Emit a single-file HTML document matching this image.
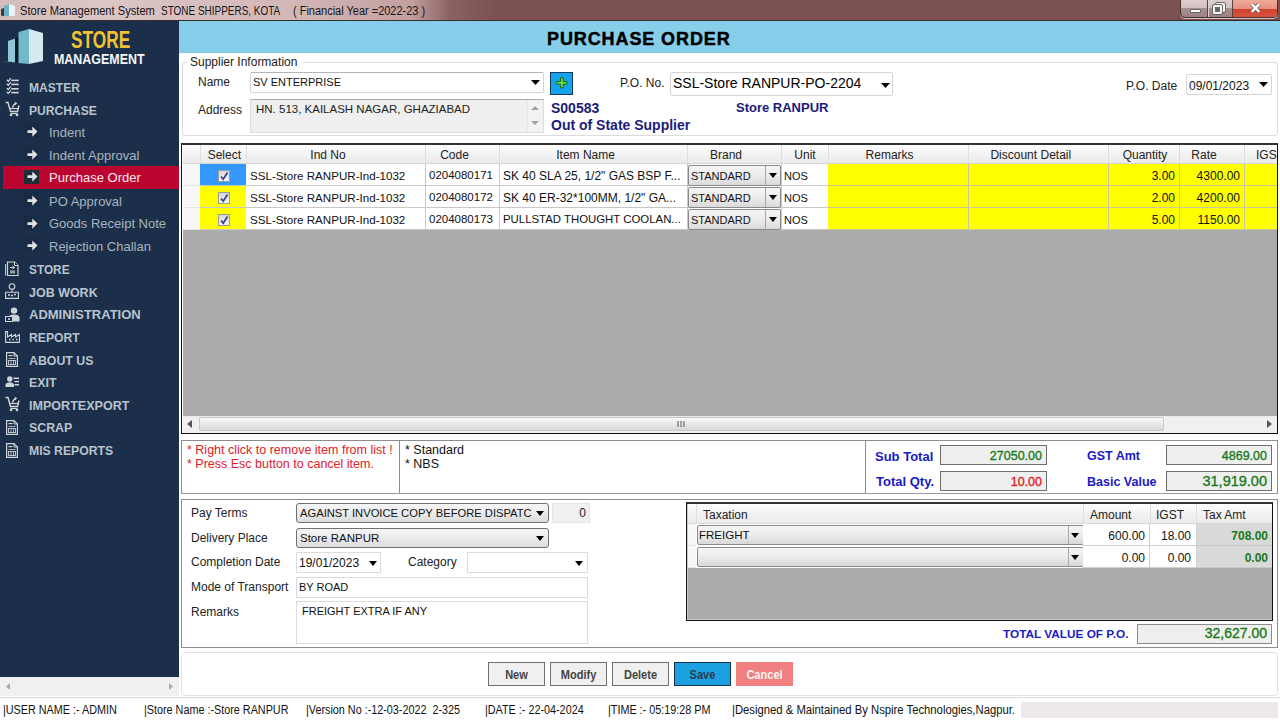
<!DOCTYPE html>
<html><head><meta charset="utf-8">
<style>
*{margin:0;padding:0;box-sizing:border-box}
html,body{width:1280px;height:720px;overflow:hidden;background:#fff;font-family:"Liberation Sans",sans-serif;font-size:12px;color:#000}
.a{position:absolute}
.t{position:absolute;white-space:nowrap;line-height:1}
#title{left:0;top:0;width:1280px;height:21px;background:linear-gradient(90deg,#d4bcbc 0px,#dcc6c6 100px,#d2b6b6 300px,#c4a0a0 410px,#8a6262 450px,#7a5050 500px,#7a5050 1280px)}
#side{left:0;top:21px;width:179px;height:656px;background:#1b2f4a}
.mm{position:absolute;left:29px;font-weight:bold;font-size:13px;color:#b9c3ce;line-height:1;transform-origin:0 0;white-space:nowrap}
.ms{position:absolute;left:49px;font-size:13px;color:#a9b4bf;line-height:1;white-space:nowrap}
.arr{position:absolute;left:26px;width:12px;height:12px}
</style></head><body>
<!-- title bar -->
<div id="title" class="a"></div>
<div class="a" style="left:0;top:20px;width:1280px;height:1px;background:#3a2a2a"></div>
<div class="t" style="left:20px;top:5px;font-size:12.3px;color:#151515;transform-origin:0 0;transform:scaleX(0.905)">Store Management System</div><div class="t" style="left:161px;top:5px;font-size:12.3px;color:#151515;transform-origin:0 0;transform:scaleX(0.81)">STONE SHIPPERS, KOTA</div><div class="t" style="left:293px;top:5px;font-size:12.3px;color:#151515;transform-origin:0 0;transform:scaleX(0.893)">( Financial Year =2022-23 )</div>

<!-- sidebar -->
<div id="side" class="a"></div>
<div class="t" style="left:71px;top:28px;font-size:24px;font-weight:bold;color:#f1c232;transform-origin:0 0;transform:scaleX(0.72)">STORE</div>
<div class="t" style="left:54px;top:51px;font-size:15px;font-weight:bold;color:#f4f6f8;transform-origin:0 0;transform:scaleX(0.83)">MANAGEMENT</div>

<div class="mm" style="top:80.8px;transform:scaleX(0.93)">MASTER</div>
<div class="mm" style="top:104.3px;transform:scaleX(0.93)">PURCHASE</div>
<div class="mm" style="top:263.3px;transform:scaleX(0.91)">STORE</div>
<div class="mm" style="top:285.8px;transform:scaleX(0.96)">JOB WORK</div>
<div class="mm" style="top:308.3px;transform:scaleX(1.0)">ADMINISTRATION</div>
<div class="mm" style="top:330.8px;transform:scaleX(0.935)">REPORT</div>
<div class="mm" style="top:353.5px;transform:scaleX(0.95)">ABOUT US</div>
<div class="mm" style="top:375.8px;transform:scaleX(0.95)">EXIT</div>
<div class="mm" style="top:398.8px;transform:scaleX(0.966)">IMPORTEXPORT</div>
<div class="mm" style="top:421.3px;transform:scaleX(0.95)">SCRAP</div>
<div class="mm" style="top:444.3px;transform:scaleX(0.94)">MIS REPORTS</div>
<div class="a" style="left:3px;top:166px;width:176px;height:23px;background:#bb0530"></div>
<div class="ms" style="top:126.3px">Indent</div>
<div class="ms" style="top:149.3px">Indent Approval</div>
<div class="ms" style="top:171.3px;color:#fbe9ee">Purchase Order</div>
<div class="ms" style="top:194.5px">PO Approval</div>
<div class="ms" style="top:217px">Goods Receipt Note</div>
<div class="ms" style="top:239.5px">Rejection Challan</div>

<!-- header -->
<div class="a" style="left:179px;top:21px;width:1101px;height:32px;background:#87ceeb"></div>
<div class="t" style="left:547px;top:30px;font-size:18px;font-weight:bold;letter-spacing:0.9px;-webkit-text-stroke:0.45px #000">PURCHASE ORDER</div>


<!-- form bg -->
<div class="a" style="left:179px;top:53px;width:1101px;height:624px;background:#fff"></div>
<!-- supplier group -->
<div class="a" style="left:182px;top:62px;width:1096px;height:74px;border:1px solid #dcdcdc;border-radius:3px"></div>
<div class="a" style="left:187px;top:56px;width:116px;height:10px;background:#fff"></div>
<div class="t" style="left:190px;top:56px;font-size:12px;color:#222">Supplier Information</div>
<div class="t" style="left:198px;top:76px;font-size:12px;color:#222">Name</div>
<div class="t" style="left:198px;top:104px;font-size:12px;color:#222">Address</div>
<div class="a" style="left:250px;top:72px;width:294px;height:21px;border:1px solid #d4d4d4;border-top-color:#b4b4b4;border-radius:2px;background:#fff"></div>
<div class="t" style="left:253px;top:77px;font-size:11px;color:#111">SV ENTERPRISE</div>
<svg class="a" style="left:531px;top:80px" width="9" height="5"><path d="M0 0H9L4.5 5Z" fill="#000"/></svg>
<div class="a" style="left:250px;top:99px;width:294px;height:34px;border:1px solid #dcdcdc;border-top-color:#a8a8a8;background:#efefef"></div>
<div class="a" style="left:527px;top:100px;width:16px;height:32px;background:#f2f2f2;border-left:1px solid #e4e4e4"></div>
<svg class="a" style="left:531px;top:106px" width="8" height="4"><path d="M0 4H8L4 0Z" fill="#a0a0a0"/></svg>
<svg class="a" style="left:531px;top:121px" width="8" height="4"><path d="M0 0H8L4 4Z" fill="#a0a0a0"/></svg>
<div class="t" style="left:256px;top:104px;font-size:11.5px;color:#222">HN. 513, KAILASH NAGAR, GHAZIABAD</div>
<div class="a" style="left:550px;top:72px;width:23px;height:23px;background:#13a4ec;border:1px solid #143c5a"></div>
<svg class="a" style="left:556px;top:77px" width="12" height="12"><path d="M4.5 0.7h2.6v3.8h3.8v2.6h-3.8v3.8h-2.6v-3.8h-3.8v-2.6h3.8z" fill="#6ee04a" stroke="#1f6a14" stroke-width="1"/></svg>
<div class="t" style="left:551px;top:101px;font-size:14px;font-weight:bold;color:#1c1c7c">S00583</div>
<div class="t" style="left:551px;top:118px;font-size:14px;font-weight:bold;color:#1c1c7c">Out of State Supplier</div>
<div class="t" style="left:620px;top:77px;font-size:12px;color:#222">P.O. No.</div>
<div class="a" style="left:670px;top:72px;width:223px;height:24px;border:1px solid #d4d4d4;border-radius:2px;background:#fff"></div>
<div class="t" style="left:673px;top:76px;font-size:14px;color:#000">SSL-Store RANPUR-PO-2204</div>
<svg class="a" style="left:881px;top:83px" width="9" height="5"><path d="M0 0H9L4.5 5Z" fill="#000"/></svg>
<div class="t" style="left:736px;top:101px;font-size:13px;font-weight:bold;color:#1c1c7c">Store RANPUR</div>
<div class="t" style="left:1126px;top:80px;font-size:12px;color:#222">P.O. Date</div>
<div class="a" style="left:1186px;top:74px;width:86px;height:21px;border:1px solid #d4d4d4;border-radius:2px;background:#fff"></div>
<div class="t" style="left:1189px;top:80px;font-size:12px;color:#111">09/01/2023</div>
<svg class="a" style="left:1259px;top:82px" width="9" height="5"><path d="M0 0H9L4.5 5Z" fill="#000"/></svg>
<!-- grid -->
<div class="a" style="left:181px;top:143px;width:1097px;height:291px;border:1px solid #111;border-top:2px solid #333;background:#ababab;overflow:hidden"><div class="a" style="left:0;top:0;width:1px;height:300px;background:#fff"></div><div class="a" style="left:0;top:287px;width:1100px;height:1px;background:#fff"></div><div class="a" style="left:1px;top:0;width:1100px;height:300px">
<div class="a" style="left:0;top:0;width:1100px;height:19px;background:linear-gradient(#fdfdfd,#f3f3f3 50%,#eaeaea);border-bottom:1px solid #d5d5d5"></div>
<div class="a" style="left:17px;top:0;width:1px;height:19px;background:#dedede"></div>
<div class="a" style="left:63px;top:0;width:1px;height:19px;background:#dedede"></div>
<div class="t" style="left:-18.7px;width:120px;top:4px;text-align:center;font-size:12px;color:#222">Select</div>
<div class="a" style="left:242px;top:0;width:1px;height:19px;background:#dedede"></div>
<div class="t" style="left:85.0px;width:120px;top:4px;text-align:center;font-size:12px;color:#222">Ind No</div>
<div class="a" style="left:316px;top:0;width:1px;height:19px;background:#dedede"></div>
<div class="t" style="left:211.5px;width:120px;top:4px;text-align:center;font-size:12px;color:#222">Code</div>
<div class="a" style="left:504px;top:0;width:1px;height:19px;background:#dedede"></div>
<div class="t" style="left:342.6px;width:120px;top:4px;text-align:center;font-size:12px;color:#222">Item Name</div>
<div class="a" style="left:598px;top:0;width:1px;height:19px;background:#dedede"></div>
<div class="t" style="left:483.0px;width:120px;top:4px;text-align:center;font-size:12px;color:#222">Brand</div>
<div class="a" style="left:645px;top:0;width:1px;height:19px;background:#dedede"></div>
<div class="t" style="left:562.0px;width:120px;top:4px;text-align:center;font-size:12px;color:#222">Unit</div>
<div class="a" style="left:785px;top:0;width:1px;height:19px;background:#dedede"></div>
<div class="t" style="left:646.6px;width:120px;top:4px;text-align:center;font-size:12px;color:#222">Remarks</div>
<div class="a" style="left:925px;top:0;width:1px;height:19px;background:#dedede"></div>
<div class="t" style="left:787.8px;width:120px;top:4px;text-align:center;font-size:12px;color:#222">Discount Detail</div>
<div class="a" style="left:996px;top:0;width:1px;height:19px;background:#dedede"></div>
<div class="t" style="left:902.0px;width:120px;top:4px;text-align:center;font-size:12px;color:#222">Quantity</div>
<div class="a" style="left:1061px;top:0;width:1px;height:19px;background:#dedede"></div>
<div class="t" style="left:961.0px;width:120px;top:4px;text-align:center;font-size:12px;color:#222">Rate</div>
<div class="a" style="left:1127px;top:0;width:1px;height:19px;background:#dedede"></div>
<div class="t" style="left:1027.0px;width:120px;top:4px;text-align:center;font-size:12px;color:#222">IGST</div>
<div class="a" style="left:0;top:19px;width:17px;height:22px;background:#f7f7f7;border-bottom:1px solid #e6e6e6"></div>
<div class="a" style="left:17px;top:19px;width:46px;height:22px;background:#3399ff;border-bottom:1px solid #c8c8c8"></div>
<div class="a" style="left:35px;top:25px;width:12px;height:12px;background:linear-gradient(#d8d8d8,#f6f6f6);border:1px solid #9a9a9a"></div>
<svg class="a" style="left:36px;top:26px" width="10" height="10"><path d="M2 5.5L4.2 8.3L8.5 1.5" stroke="#34448c" stroke-width="1.7" fill="none"/></svg>
<div class="a" style="left:63px;top:19px;width:582px;height:22px;background:#fff;border-bottom:1px solid #c8c8c8"></div>
<div class="a" style="left:242px;top:19px;width:1px;height:22px;background:#c8c8c8"></div>
<div class="a" style="left:316px;top:19px;width:1px;height:22px;background:#c8c8c8"></div>
<div class="a" style="left:504px;top:19px;width:1px;height:22px;background:#c8c8c8"></div>
<div class="a" style="left:598px;top:19px;width:1px;height:22px;background:#c8c8c8"></div>
<div class="a" style="left:645px;top:19px;width:1px;height:22px;background:#c8c8c8"></div>
<div class="t" style="left:67px;top:25px;font-size:11.6px;color:#111">SSL-Store RANPUR-Ind-1032</div>
<div class="t" style="left:246px;top:25px;font-size:11.5px;color:#111">0204080171</div>
<div class="t" style="left:320px;top:25px;font-size:12px;color:#111">SK 40 SLA 25, 1/2&quot; GAS BSP F...</div>
<div class="a" style="left:505px;top:20px;width:93px;height:21px;border:1px solid #8a8a8a;border-radius:2px;background:linear-gradient(#f5f5f5,#ececec 50%,#dadada)"></div>
<div class="a" style="left:582px;top:21px;width:1px;height:19px;background:#a8a8a8"></div>
<div class="t" style="left:508px;top:26px;font-size:11px;color:#111">STANDARD</div>
<svg class="a" style="left:586px;top:28px" width="8" height="5"><path d="M0 0H8L4 5Z" fill="#000"/></svg>
<div class="t" style="left:601px;top:26px;font-size:11px;color:#111">NOS</div>
<div class="a" style="left:645px;top:19px;width:500px;height:22px;background:#ffff00;border-bottom:1px solid #c8c89a"></div>
<div class="a" style="left:785px;top:19px;width:1px;height:22px;background:#c8c89a"></div>
<div class="a" style="left:925px;top:19px;width:1px;height:22px;background:#c8c89a"></div>
<div class="a" style="left:996px;top:19px;width:1px;height:22px;background:#c8c89a"></div>
<div class="a" style="left:1061px;top:19px;width:1px;height:22px;background:#c8c89a"></div>
<div class="t" style="left:925px;width:67px;top:25px;text-align:right;font-size:12px;color:#111">3.00</div>
<div class="t" style="left:996px;width:61px;top:25px;text-align:right;font-size:12px;color:#111">4300.00</div>
<div class="a" style="left:0;top:41px;width:17px;height:22px;background:#f7f7f7;border-bottom:1px solid #e6e6e6"></div>
<div class="a" style="left:17px;top:41px;width:46px;height:22px;background:#ffff00;border-bottom:1px solid #c8c8c8"></div>
<div class="a" style="left:35px;top:47px;width:12px;height:12px;background:linear-gradient(#d8d8d8,#f6f6f6);border:1px solid #9a9a9a"></div>
<svg class="a" style="left:36px;top:48px" width="10" height="10"><path d="M2 5.5L4.2 8.3L8.5 1.5" stroke="#34448c" stroke-width="1.7" fill="none"/></svg>
<div class="a" style="left:63px;top:41px;width:582px;height:22px;background:#fff;border-bottom:1px solid #c8c8c8"></div>
<div class="a" style="left:242px;top:41px;width:1px;height:22px;background:#c8c8c8"></div>
<div class="a" style="left:316px;top:41px;width:1px;height:22px;background:#c8c8c8"></div>
<div class="a" style="left:504px;top:41px;width:1px;height:22px;background:#c8c8c8"></div>
<div class="a" style="left:598px;top:41px;width:1px;height:22px;background:#c8c8c8"></div>
<div class="a" style="left:645px;top:41px;width:1px;height:22px;background:#c8c8c8"></div>
<div class="t" style="left:67px;top:47px;font-size:11.6px;color:#111">SSL-Store RANPUR-Ind-1032</div>
<div class="t" style="left:246px;top:47px;font-size:11.5px;color:#111">0204080172</div>
<div class="t" style="left:320px;top:47px;font-size:12px;color:#111">SK 40 ER-32*100MM, 1/2&quot; GA...</div>
<div class="a" style="left:505px;top:42px;width:93px;height:21px;border:1px solid #8a8a8a;border-radius:2px;background:linear-gradient(#f5f5f5,#ececec 50%,#dadada)"></div>
<div class="a" style="left:582px;top:43px;width:1px;height:19px;background:#a8a8a8"></div>
<div class="t" style="left:508px;top:48px;font-size:11px;color:#111">STANDARD</div>
<svg class="a" style="left:586px;top:50px" width="8" height="5"><path d="M0 0H8L4 5Z" fill="#000"/></svg>
<div class="t" style="left:601px;top:48px;font-size:11px;color:#111">NOS</div>
<div class="a" style="left:645px;top:41px;width:500px;height:22px;background:#ffff00;border-bottom:1px solid #c8c89a"></div>
<div class="a" style="left:785px;top:41px;width:1px;height:22px;background:#c8c89a"></div>
<div class="a" style="left:925px;top:41px;width:1px;height:22px;background:#c8c89a"></div>
<div class="a" style="left:996px;top:41px;width:1px;height:22px;background:#c8c89a"></div>
<div class="a" style="left:1061px;top:41px;width:1px;height:22px;background:#c8c89a"></div>
<div class="t" style="left:925px;width:67px;top:47px;text-align:right;font-size:12px;color:#111">2.00</div>
<div class="t" style="left:996px;width:61px;top:47px;text-align:right;font-size:12px;color:#111">4200.00</div>
<div class="a" style="left:0;top:63px;width:17px;height:22px;background:#f7f7f7;border-bottom:1px solid #e6e6e6"></div>
<div class="a" style="left:17px;top:63px;width:46px;height:22px;background:#ffff00;border-bottom:1px solid #c8c8c8"></div>
<div class="a" style="left:35px;top:69px;width:12px;height:12px;background:linear-gradient(#d8d8d8,#f6f6f6);border:1px solid #9a9a9a"></div>
<svg class="a" style="left:36px;top:70px" width="10" height="10"><path d="M2 5.5L4.2 8.3L8.5 1.5" stroke="#34448c" stroke-width="1.7" fill="none"/></svg>
<div class="a" style="left:63px;top:63px;width:582px;height:22px;background:#fff;border-bottom:1px solid #c8c8c8"></div>
<div class="a" style="left:242px;top:63px;width:1px;height:22px;background:#c8c8c8"></div>
<div class="a" style="left:316px;top:63px;width:1px;height:22px;background:#c8c8c8"></div>
<div class="a" style="left:504px;top:63px;width:1px;height:22px;background:#c8c8c8"></div>
<div class="a" style="left:598px;top:63px;width:1px;height:22px;background:#c8c8c8"></div>
<div class="a" style="left:645px;top:63px;width:1px;height:22px;background:#c8c8c8"></div>
<div class="t" style="left:67px;top:69px;font-size:11.6px;color:#111">SSL-Store RANPUR-Ind-1032</div>
<div class="t" style="left:246px;top:69px;font-size:11.5px;color:#111">0204080173</div>
<div class="t" style="left:320px;top:69px;font-size:11.4px;color:#111">PULLSTAD THOUGHT COOLAN...</div>
<div class="a" style="left:505px;top:64px;width:93px;height:21px;border:1px solid #8a8a8a;border-radius:2px;background:linear-gradient(#f5f5f5,#ececec 50%,#dadada)"></div>
<div class="a" style="left:582px;top:65px;width:1px;height:19px;background:#a8a8a8"></div>
<div class="t" style="left:508px;top:70px;font-size:11px;color:#111">STANDARD</div>
<svg class="a" style="left:586px;top:72px" width="8" height="5"><path d="M0 0H8L4 5Z" fill="#000"/></svg>
<div class="t" style="left:601px;top:70px;font-size:11px;color:#111">NOS</div>
<div class="a" style="left:645px;top:63px;width:500px;height:22px;background:#ffff00;border-bottom:1px solid #c8c89a"></div>
<div class="a" style="left:785px;top:63px;width:1px;height:22px;background:#c8c89a"></div>
<div class="a" style="left:925px;top:63px;width:1px;height:22px;background:#c8c89a"></div>
<div class="a" style="left:996px;top:63px;width:1px;height:22px;background:#c8c89a"></div>
<div class="a" style="left:1061px;top:63px;width:1px;height:22px;background:#c8c89a"></div>
<div class="t" style="left:925px;width:67px;top:69px;text-align:right;font-size:12px;color:#111">5.00</div>
<div class="t" style="left:996px;width:61px;top:69px;text-align:right;font-size:12px;color:#111">1150.00</div>
<div class="a" style="left:0;top:271px;width:1100px;height:17px;background:#f0f0f0;border-top:1px solid #e8e8e8"></div>
<div class="a" style="left:16px;top:272px;width:965px;height:14px;border:1px solid #c8c8c8;border-radius:2px;background:linear-gradient(#f8f8f8,#e8e8e8 50%,#d8d8d8)"></div>
<svg class="a" style="left:4px;top:275px" width="5" height="8"><path d="M5 0V8L0 4Z" fill="#555"/></svg>
<svg class="a" style="left:1084px;top:275px" width="5" height="8"><path d="M0 0V8L5 4Z" fill="#555"/></svg>
<svg class="a" style="left:494px;top:275px" width="8" height="8"><path d="M1 1V7M4 1V7M7 1V7" stroke="#555" stroke-width="1"/></svg>
</div></div>
<!-- notes/totals -->
<div class="a" style="left:181px;top:440px;width:1097px;height:54px;border:1px solid #8c8c8c;border-bottom-color:#9a9a9a"></div>
<div class="a" style="left:399px;top:441px;width:1px;height:52px;background:#8c8c8c"></div>
<div class="a" style="left:865px;top:441px;width:1px;height:52px;background:#8c8c8c"></div>
<div class="t" style="left:187px;top:444px;font-size:12.5px;color:#e0202a">* Right click to remove item from list !</div>
<div class="t" style="left:187px;top:458px;font-size:12.5px;color:#e0202a">* Press Esc button to cancel item.</div>
<div class="t" style="left:405px;top:444px;font-size:12.5px;color:#111">* Standard</div>
<div class="t" style="left:405px;top:458px;font-size:12.5px;color:#111">* NBS</div>
<div class="t" style="left:875px;top:450px;font-size:13px;font-weight:bold;color:#1a1ac4">Sub Total</div>
<div class="t" style="left:876px;top:475px;font-size:13px;font-weight:bold;color:#1a1ac4">Total Qty.</div>
<div class="t" style="left:1087px;top:450px;font-size:12.5px;font-weight:bold;color:#1a1ac4">GST Amt</div>
<div class="t" style="left:1087px;top:476px;font-size:12.5px;font-weight:bold;color:#1a1ac4">Basic Value</div>
<div class="a" style="left:940px;top:445px;width:107px;height:20px;border:1px solid #6e6e6e;background:#efefef"></div>
<div class="t" style="left:940px;width:102px;top:450px;text-align:right;font-size:12.5px;color:#1a7a1a;-webkit-text-stroke:0.35px #1a7a1a">27050.00</div>
<div class="a" style="left:940px;top:471px;width:107px;height:20px;border:1px solid #6e6e6e;background:#efefef"></div>
<div class="t" style="left:940px;width:102px;top:476px;text-align:right;font-size:12.5px;color:#e02020;-webkit-text-stroke:0.35px #e02020">10.00</div>
<div class="a" style="left:1166px;top:445px;width:106px;height:20px;border:1px solid #6e6e6e;background:#efefef"></div>
<div class="t" style="left:1166px;width:101px;top:450px;text-align:right;font-size:12.5px;color:#1a7a1a;-webkit-text-stroke:0.35px #1a7a1a">4869.00</div>
<div class="a" style="left:1166px;top:471px;width:106px;height:20px;border:1px solid #6e6e6e;background:#efefef"></div>
<div class="t" style="left:1166px;width:101px;top:474px;text-align:right;font-size:14.5px;color:#1a7a1a;-webkit-text-stroke:0.35px #1a7a1a">31,919.00</div>
<div class="a" style="left:181px;top:499px;width:1097px;height:149px;border:1px solid #8c8c8c"></div>
<div class="t" style="left:191px;top:507px;font-size:12px;color:#222">Pay Terms</div>
<div class="t" style="left:191px;top:532px;font-size:12px;color:#222">Delivery Place</div>
<div class="t" style="left:191px;top:556px;font-size:12px;color:#222">Completion Date</div>
<div class="t" style="left:191px;top:581px;font-size:12px;color:#222">Mode of Transport</div>
<div class="t" style="left:191px;top:606px;font-size:12px;color:#222">Remarks</div>
<div class="a" style="left:296px;top:503px;width:253px;height:20px;border:1px solid #707070;border-radius:3px;background:linear-gradient(#f6f6f6,#ebebeb 50%,#dcdcdc);overflow:hidden"><div class="t" style="left:3px;top:4px;font-size:11.2px;color:#111;width:232px;overflow:hidden">AGAINST INVOICE COPY BEFORE DISPATC</div></div>
<svg class="a" style="left:536px;top:511px" width="8" height="5"><path d="M0 0H8L4 5Z" fill="#000"/></svg>
<div class="a" style="left:296px;top:528px;width:253px;height:20px;border:1px solid #707070;border-radius:3px;background:linear-gradient(#f6f6f6,#ebebeb 50%,#dcdcdc);overflow:hidden"><div class="t" style="left:3px;top:4px;font-size:11.5px;color:#111;width:232px;overflow:hidden">Store RANPUR</div></div>
<svg class="a" style="left:536px;top:536px" width="8" height="5"><path d="M0 0H8L4 5Z" fill="#000"/></svg>
<div class="a" style="left:552px;top:503px;width:38px;height:20px;border:1px solid #e4e4e4;background:#f0f0f0"></div>
<div class="t" style="left:552px;width:34px;top:507px;text-align:right;font-size:12px;color:#222">0</div>
<div class="a" style="left:296px;top:552px;width:85px;height:21px;border:1px solid #dcdcdc;background:#fff"></div>
<div class="t" style="left:299px;top:557px;font-size:12px;color:#111">19/01/2023</div>
<svg class="a" style="left:369px;top:561px" width="8" height="5"><path d="M0 0H8L4 5Z" fill="#000"/></svg>
<div class="t" style="left:408px;top:556px;font-size:12px;color:#222">Category</div>
<div class="a" style="left:467px;top:552px;width:121px;height:21px;border:1px solid #dcdcdc;background:#fff"></div>
<svg class="a" style="left:575px;top:561px" width="8" height="5"><path d="M0 0H8L4 5Z" fill="#000"/></svg>
<div class="a" style="left:296px;top:577px;width:292px;height:21px;border:1px solid #dcdcdc;background:#fff"></div>
<div class="t" style="left:299px;top:582px;font-size:11px;color:#111">BY ROAD</div>
<div class="a" style="left:296px;top:601px;width:292px;height:43px;border:1px solid #dcdcdc;background:#fff"></div>
<div class="t" style="left:302px;top:606px;font-size:11px;color:#111">FREIGHT EXTRA IF ANY</div>
<div class="a" style="left:686px;top:502px;width:587px;height:119px;border:1px solid #111;border-top:2px solid #333;background:#ababab;overflow:hidden"><div class="a" style="left:0;top:0;width:1px;height:130px;background:#c8c8c8"></div><div class="a" style="left:0;top:115px;width:600px;height:1px;background:#c8c8c8"></div><div class="a" style="left:1px;top:0;width:600px;height:130px">
<div class="a" style="left:0;top:0;width:590px;height:20px;background:linear-gradient(#fdfdfd,#f3f3f3 50%,#eaeaea);border-bottom:1px solid #d8d8d8"></div>
<div class="a" style="left:8px;top:0;width:1px;height:20px;background:#e0e0e0"></div>
<div class="a" style="left:395px;top:0;width:1px;height:20px;background:#e0e0e0"></div>
<div class="a" style="left:462px;top:0;width:1px;height:20px;background:#e0e0e0"></div>
<div class="a" style="left:508px;top:0;width:1px;height:20px;background:#e0e0e0"></div>
<div class="t" style="left:15px;top:5px;font-size:12px;color:#222">Taxation</div>
<div class="t" style="left:402px;top:5px;font-size:12px;color:#222">Amount</div>
<div class="t" style="left:468px;top:5px;font-size:12px;color:#222">IGST</div>
<div class="t" style="left:515px;top:5px;font-size:12px;color:#222">Tax Amt</div>
<div class="a" style="left:0;top:20px;width:8px;height:22px;background:#f7f7f7;border-bottom:1px solid #e6e6e6"></div>
<div class="a" style="left:8px;top:20px;width:400px;height:22px;background:#fff"></div>
<div class="a" style="left:9px;top:21px;width:387px;height:20px;border:1px solid #8a8a8a;border-radius:2px;background:linear-gradient(#f5f5f5,#ececec 50%,#d8d8d8)"></div>
<div class="a" style="left:380px;top:22px;width:1px;height:18px;background:#a8a8a8"></div>
<svg class="a" style="left:383px;top:29px" width="8" height="5"><path d="M0 0H8L4 5Z" fill="#000"/></svg>
<div class="t" style="left:11px;top:26px;font-size:11.5px;color:#111">FREIGHT</div>
<div class="a" style="left:395px;top:20px;width:113px;height:22px;background:#fff;border-bottom:1px solid #d0d0d0"></div>
<div class="a" style="left:461px;top:20px;width:1px;height:22px;background:#d0d0d0"></div>
<div class="a" style="left:508px;top:20px;width:1px;height:22px;background:#d0d0d0"></div>
<div class="a" style="left:509px;top:20px;width:80px;height:22px;background:#d9d9d9;border-bottom:1px solid #c8c8c8"></div>
<div class="t" style="left:395px;width:62px;top:26px;text-align:right;font-size:12px;color:#111">600.00</div>
<div class="t" style="left:462px;width:41px;top:26px;text-align:right;font-size:12px;color:#111">18.00</div>
<div class="t" style="left:509px;width:71px;top:26px;text-align:right;font-size:12px;font-weight:bold;color:#1a7a1a">708.00</div>
<div class="a" style="left:0;top:42px;width:8px;height:22px;background:#f7f7f7;border-bottom:1px solid #e6e6e6"></div>
<div class="a" style="left:8px;top:42px;width:400px;height:22px;background:#fff"></div>
<div class="a" style="left:9px;top:43px;width:387px;height:20px;border:1px solid #8a8a8a;border-radius:2px;background:linear-gradient(#f5f5f5,#ececec 50%,#d8d8d8)"></div>
<div class="a" style="left:380px;top:44px;width:1px;height:18px;background:#a8a8a8"></div>
<svg class="a" style="left:383px;top:51px" width="8" height="5"><path d="M0 0H8L4 5Z" fill="#000"/></svg>
<div class="a" style="left:395px;top:42px;width:113px;height:22px;background:#fff;border-bottom:1px solid #d0d0d0"></div>
<div class="a" style="left:461px;top:42px;width:1px;height:22px;background:#d0d0d0"></div>
<div class="a" style="left:508px;top:42px;width:1px;height:22px;background:#d0d0d0"></div>
<div class="a" style="left:509px;top:42px;width:80px;height:22px;background:#d9d9d9;border-bottom:1px solid #c8c8c8"></div>
<div class="t" style="left:395px;width:62px;top:48px;text-align:right;font-size:12px;color:#111">0.00</div>
<div class="t" style="left:462px;width:41px;top:48px;text-align:right;font-size:12px;color:#111">0.00</div>
<div class="t" style="left:509px;width:71px;top:48px;text-align:right;font-size:12px;font-weight:bold;color:#1a7a1a">0.00</div>
</div></div>
<div class="t" style="left:1003px;top:629px;font-size:11.8px;font-weight:bold;color:#1a1ac4">TOTAL VALUE OF P.O.</div>
<div class="a" style="left:1137px;top:624px;width:135px;height:20px;border:1px solid #8c8c8c;background:#efefef"></div>
<div class="t" style="left:1137px;width:130px;top:626px;text-align:right;font-size:14px;color:#1a7a1a;-webkit-text-stroke:0.35px #1a7a1a">32,627.00</div>
<div class="a" style="left:181px;top:652px;width:1097px;height:44px;border:1px solid #e2e2e2;border-radius:4px"></div>
<div class="a" style="left:488px;top:662px;width:57px;height:24px;background:#f0f0f0;border:1px solid #707070"></div>
<div class="t" style="left:488px;width:57px;top:669px;text-align:center;font-size:12px;font-weight:bold;color:#444;transform:scaleX(0.92)">New</div>
<div class="a" style="left:550px;top:662px;width:57px;height:24px;background:#f0f0f0;border:1px solid #707070"></div>
<div class="t" style="left:550px;width:57px;top:669px;text-align:center;font-size:12px;font-weight:bold;color:#444;transform:scaleX(0.92)">Modify</div>
<div class="a" style="left:612px;top:662px;width:57px;height:24px;background:#f0f0f0;border:1px solid #707070"></div>
<div class="t" style="left:612px;width:57px;top:669px;text-align:center;font-size:12px;font-weight:bold;color:#444;transform:scaleX(0.92)">Delete</div>
<div class="a" style="left:674px;top:662px;width:57px;height:24px;background:#1ba1e2;border:1px solid #1b2f4a"></div>
<div class="t" style="left:674px;width:57px;top:669px;text-align:center;font-size:12px;font-weight:bold;color:#2a3a4a;transform:scaleX(0.92)">Save</div>
<div class="a" style="left:736px;top:662px;width:57px;height:24px;background:#f08080;border:1px solid #f08080"></div>
<div class="t" style="left:736px;width:57px;top:669px;text-align:center;font-size:12px;font-weight:bold;color:#fff4f4;transform:scaleX(0.92)">Cancel</div>
<div class="a" style="left:0;top:677px;width:179px;height:19px;background:#f0f0f0"></div>
<svg class="a" style="left:6px;top:683px" width="4" height="7"><path d="M4 0V7L0 3.5Z" fill="#aaa"/></svg>
<svg class="a" style="left:169px;top:683px" width="4" height="7"><path d="M0 0V7L4 3.5Z" fill="#aaa"/></svg>
<div class="a" style="left:0;top:697px;width:1280px;height:23px;background:#fff;border-top:1px solid #d8d8d8"></div>
<div class="t" style="left:3px;top:704px;font-size:12px;color:#111;transform-origin:0 0;transform:scaleX(0.90)">|USER NAME :- ADMIN</div>
<div class="t" style="left:144px;top:704px;font-size:12px;color:#111;transform-origin:0 0;transform:scaleX(0.90)">|Store Name :-Store RANPUR</div>
<div class="t" style="left:305.5px;top:704px;font-size:12px;color:#111;transform-origin:0 0;transform:scaleX(0.90)">|Version No :-12-03-2022&nbsp; 2-325</div>
<div class="t" style="left:485px;top:704px;font-size:12px;color:#111;transform-origin:0 0;transform:scaleX(0.90)">|DATE :- 22-04-2024</div>
<div class="t" style="left:608px;top:704px;font-size:12px;color:#111;transform-origin:0 0;transform:scaleX(0.90)">|TIME :- 05:19:28 PM</div>
<div class="t" style="left:732px;top:704px;font-size:12px;color:#111;transform-origin:0 0;transform:scaleX(0.94)">|Designed &amp; Maintained By Nspire Technologies,Nagpur.</div>
<div class="a" style="left:1021px;top:702px;width:257px;height:16px;background:#ece9e8"></div>
<svg class="a" style="left:6px;top:76px" width="14" height="20" viewBox="0 0 14 20"><path d="M0.8 3.8000000000000003L2.3 5.2L4.8 2.2" stroke="#cfd4d6" stroke-width="1.3" fill="none"/><rect x="5.2" y="3.6000000000000005" width="7.5" height="1.6" fill="#cfd4d6"/><path d="M0.8 7.800000000000001L2.3 9.200000000000001L4.8 6.2" stroke="#cfd4d6" stroke-width="1.3" fill="none"/><rect x="5.2" y="7.6000000000000005" width="7.5" height="1.6" fill="#cfd4d6"/><path d="M0.8 12.200000000000001L2.3 13.600000000000001L4.8 10.600000000000001" stroke="#cfd4d6" stroke-width="1.3" fill="none"/><rect x="5.2" y="12.0" width="7.5" height="1.6" fill="#cfd4d6"/><path d="M0.8 16.0L2.3 17.400000000000002L4.8 14.400000000000002" stroke="#cfd4d6" stroke-width="1.3" fill="none"/><rect x="5.2" y="15.8" width="7.5" height="1.6" fill="#cfd4d6"/></svg>
<svg class="a" style="left:5px;top:101px" width="15" height="16" viewBox="0 0 15 16"><path d="M0.5 1.5H3L5.5 10.5H12.5L14 4.5" stroke="#cfd4d6" stroke-width="1.4" fill="none"/><path d="M4.5 7.5H13" stroke="#cfd4d6" stroke-width="1.2"/><path d="M5.5 12.5H12.5" stroke="#cfd4d6" stroke-width="1.2"/><circle cx="6" cy="14" r="1.3" fill="#cfd4d6"/><circle cx="12" cy="14" r="1.3" fill="#cfd4d6"/><path d="M7.5 6.5Q8.5 3 11 2.5" stroke="#cfd4d6" stroke-width="1.3" fill="none"/><path d="M9.8 0.8L12.3 2.3L10 4.3Z" fill="#cfd4d6"/></svg>
<svg class="a" style="left:5px;top:396px" width="15" height="16" viewBox="0 0 15 16"><path d="M0.5 1.5H3L5.5 10.5H12.5L14 4.5" stroke="#cfd4d6" stroke-width="1.4" fill="none"/><path d="M4.5 7.5H13" stroke="#cfd4d6" stroke-width="1.2"/><path d="M5.5 12.5H12.5" stroke="#cfd4d6" stroke-width="1.2"/><circle cx="6" cy="14" r="1.3" fill="#cfd4d6"/><circle cx="12" cy="14" r="1.3" fill="#cfd4d6"/><path d="M7.5 6.5Q8.5 3 11 2.5" stroke="#cfd4d6" stroke-width="1.3" fill="none"/><path d="M9.8 0.8L12.3 2.3L10 4.3Z" fill="#cfd4d6"/></svg>
<div class="a" style="left:24px;top:123px;width:15px;height:15px;background:rgba(10,20,30,0.12)"></div>
<svg class="a" style="left:27px;top:125.5px" width="11" height="11" viewBox="0 0 11 11"><path d="M0.5 4.2H5.3V0.5L10.5 5.6L5.3 10.7V7H0.5Z" fill="#e2e2e2"/></svg>
<div class="a" style="left:24px;top:146px;width:15px;height:15px;background:rgba(10,20,30,0.12)"></div>
<svg class="a" style="left:27px;top:148.5px" width="11" height="11" viewBox="0 0 11 11"><path d="M0.5 4.2H5.3V0.5L10.5 5.6L5.3 10.7V7H0.5Z" fill="#e2e2e2"/></svg>
<div class="a" style="left:24px;top:192px;width:15px;height:15px;background:rgba(10,20,30,0.12)"></div>
<svg class="a" style="left:27px;top:194.5px" width="11" height="11" viewBox="0 0 11 11"><path d="M0.5 4.2H5.3V0.5L10.5 5.6L5.3 10.7V7H0.5Z" fill="#e2e2e2"/></svg>
<div class="a" style="left:24px;top:215px;width:15px;height:15px;background:rgba(10,20,30,0.12)"></div>
<svg class="a" style="left:27px;top:217.5px" width="11" height="11" viewBox="0 0 11 11"><path d="M0.5 4.2H5.3V0.5L10.5 5.6L5.3 10.7V7H0.5Z" fill="#e2e2e2"/></svg>
<div class="a" style="left:24px;top:237px;width:15px;height:15px;background:rgba(10,20,30,0.12)"></div>
<svg class="a" style="left:27px;top:239.5px" width="11" height="11" viewBox="0 0 11 11"><path d="M0.5 4.2H5.3V0.5L10.5 5.6L5.3 10.7V7H0.5Z" fill="#e2e2e2"/></svg>
<div class="a" style="left:24px;top:170px;width:15px;height:14px;background:#1f2d36"></div>
<svg class="a" style="left:27px;top:171px" width="11" height="11" viewBox="0 0 11 11"><path d="M0.5 4.2H5.3V0.5L10.5 5.6L5.3 10.7V7H0.5Z" fill="#e2e2e2"/></svg>
<svg class="a" style="left:6px;top:352px" width="12" height="15" viewBox="0 0 12 15"><path d="M0.6 0.6H8L11.4 4V14.4H0.6Z" stroke="#cfd4d6" stroke-width="1.2" fill="none"/><path d="M8 0.6V4H11.4" stroke="#cfd4d6" stroke-width="1" fill="none"/><rect x="2.5" y="3" width="4" height="1.2" fill="#cfd4d6"/><rect x="2.5" y="6" width="7" height="1" fill="#cfd4d6" opacity="0.8"/><rect x="2.5" y="8.5" width="7" height="4" fill="none" stroke="#cfd4d6" stroke-width="0.9"/><path d="M5 8.5V12.5M7.5 8.5V12.5" stroke="#cfd4d6" stroke-width="0.8"/></svg>
<svg class="a" style="left:6px;top:420px" width="12" height="15" viewBox="0 0 12 15"><path d="M0.6 0.6H8L11.4 4V14.4H0.6Z" stroke="#cfd4d6" stroke-width="1.2" fill="none"/><path d="M8 0.6V4H11.4" stroke="#cfd4d6" stroke-width="1" fill="none"/><rect x="2.5" y="3" width="4" height="1.2" fill="#cfd4d6"/><rect x="2.5" y="6" width="7" height="1" fill="#cfd4d6" opacity="0.8"/><rect x="2.5" y="8.5" width="7" height="4" fill="none" stroke="#cfd4d6" stroke-width="0.9"/><path d="M5 8.5V12.5M7.5 8.5V12.5" stroke="#cfd4d6" stroke-width="0.8"/></svg>
<svg class="a" style="left:6px;top:443px" width="12" height="15" viewBox="0 0 12 15"><path d="M0.6 0.6H8L11.4 4V14.4H0.6Z" stroke="#cfd4d6" stroke-width="1.2" fill="none"/><path d="M8 0.6V4H11.4" stroke="#cfd4d6" stroke-width="1" fill="none"/><rect x="2.5" y="3" width="4" height="1.2" fill="#cfd4d6"/><rect x="2.5" y="6" width="7" height="1" fill="#cfd4d6" opacity="0.8"/><rect x="2.5" y="8.5" width="7" height="4" fill="none" stroke="#cfd4d6" stroke-width="0.9"/><path d="M5 8.5V12.5M7.5 8.5V12.5" stroke="#cfd4d6" stroke-width="0.8"/></svg>
<svg class="a" style="left:5px;top:261px" width="14" height="15" viewBox="0 0 14 15"><path d="M2.5 1H9.5L13 4.5V14.5H2.5Z" stroke="#cfd4d6" stroke-width="1.2" fill="none"/><path d="M9.5 1V4.5H13" stroke="#cfd4d6" stroke-width="1"/><path d="M0.6 3V14.5" stroke="#cfd4d6" stroke-width="1"/><path d="M5 6.5H9M7.5 5L9.5 6.5L7.5 8" stroke="#cfd4d6" stroke-width="1" fill="none"/><rect x="5" y="9.5" width="5" height="3" fill="#cfd4d6" opacity="0.7"/></svg>
<svg class="a" style="left:5px;top:283px" width="14" height="16" viewBox="0 0 14 16"><circle cx="7" cy="3.5" r="2.8" stroke="#cfd4d6" stroke-width="1.1" fill="none"/><path d="M7 6.3V9" stroke="#cfd4d6" stroke-width="1.1"/><path d="M0.6 9.2H13.4V15.4H0.6Z" stroke="#cfd4d6" stroke-width="1.1" fill="none"/><path d="M3 12H5M6 12.5H8M9 11.5H11" stroke="#cfd4d6" stroke-width="1.5"/></svg>
<svg class="a" style="left:5px;top:307px" width="15" height="15" viewBox="0 0 15 15"><circle cx="9" cy="3.6" r="3.2" fill="#cfd4d6"/><path d="M3.5 14.5V10.5Q4 7.5 9 7.5Q14 7.5 14.5 10.5V14.5Z" fill="#cfd4d6"/><rect x="0.5" y="9.5" width="7" height="5" fill="#1b2f4a" stroke="#cfd4d6" stroke-width="1"/><circle cx="4" cy="12" r="1.1" fill="#cfd4d6"/></svg>
<svg class="a" style="left:5px;top:331px" width="15" height="12" viewBox="0 0 15 12"><path d="M0.6 0.6V11.4H14.4V3.5L10.5 6V3.5L6.5 6V3.5L2.5 6V0.6Z" stroke="#cfd4d6" stroke-width="1.1" fill="none"/><path d="M4 8.5H5.5M7.5 8.5H9M11 8.5H12.5" stroke="#cfd4d6" stroke-width="1.5"/></svg>
<svg class="a" style="left:5px;top:376px" width="14" height="11" viewBox="0 0 14 11"><circle cx="4.8" cy="3" r="2.7" fill="#cfd4d6"/><path d="M0.5 11V8.8Q1 6.2 4.8 6.2Q8.6 6.2 9 8.8V11Z" fill="#cfd4d6"/><rect x="8.5" y="1.5" width="5.5" height="1.5" fill="#cfd4d6"/><rect x="9.5" y="4.8" width="4.5" height="1.5" fill="#cfd4d6"/><rect x="9.5" y="8" width="4.5" height="1.5" fill="#cfd4d6"/></svg>
<svg class="a" style="left:0px;top:21px" width="45" height="45" viewBox="0 0 45 45"><path d="M8 20 L15 17.5 V41.5 L8 40.5Z" fill="#8ec7d6"/><path d="M15 17.5 L18.5 16.5 V42 L15 41.5Z" fill="#0f1820"/><path d="M18.5 11 L29 8 V43 L18.5 42Z" fill="#73b9cc"/><path d="M29 8 L43 12 V40 L29 43Z" fill="#d3eaf1"/><path d="M0 41 L8 40.5 V41.5Z" fill="#4a5560"/></svg>
<svg class="a" style="left:0px;top:0px" width="16" height="20" viewBox="0 0 16 20"><path d="M1 9 L4 8 V16 L1 15.5Z" fill="#3a3a3a"/><path d="M4 6 L9 4 V16.5 L4 16Z" fill="#6fb2c4"/><path d="M9 4 L15 6 V15.5 L9 16.5Z" fill="#e8f4f8"/></svg>
<div class="a" style="left:1180px;top:-3px;width:98px;height:21px;border:1px solid #4a3030;border-radius:5px;box-shadow:0 1px 0 #d8c0c0;overflow:hidden;background:linear-gradient(#e0d2d2,#d2c0c0 50%,#a89090 52%,#9c8282)"><div class="a" style="left:26px;top:0;width:1px;height:21px;background:#5a4040;box-shadow:1px 0 0 #e0d0d0"></div><div class="a" style="left:51px;top:0;width:46px;height:21px;background:linear-gradient(#f0b0a0,#e89080 50%,#d04030 52%,#d85a40);border-left:1px solid #5a4040"></div></div><div class="a" style="left:1190px;top:9px;width:11px;height:4px;background:#f8f8f8;border:1px solid #666;border-radius:1px"></div><div class="a" style="left:1216px;top:3px;width:9px;height:9px;border:2px solid #f8f8f8;outline:1px solid #666;border-radius:1px"></div><div class="a" style="left:1213px;top:5px;width:9px;height:9px;border:2px solid #f8f8f8;background:#666;outline:1px solid #666;border-radius:1px"></div><svg class="a" style="left:1250px;top:3px" width="11" height="10"><path d="M1.8 1.2L9.2 8.8M9.2 1.2L1.8 8.8" stroke="#666" stroke-width="4"/><path d="M1.8 1.2L9.2 8.8M9.2 1.2L1.8 8.8" stroke="#fafafa" stroke-width="2.4"/></svg>
</body></html>
